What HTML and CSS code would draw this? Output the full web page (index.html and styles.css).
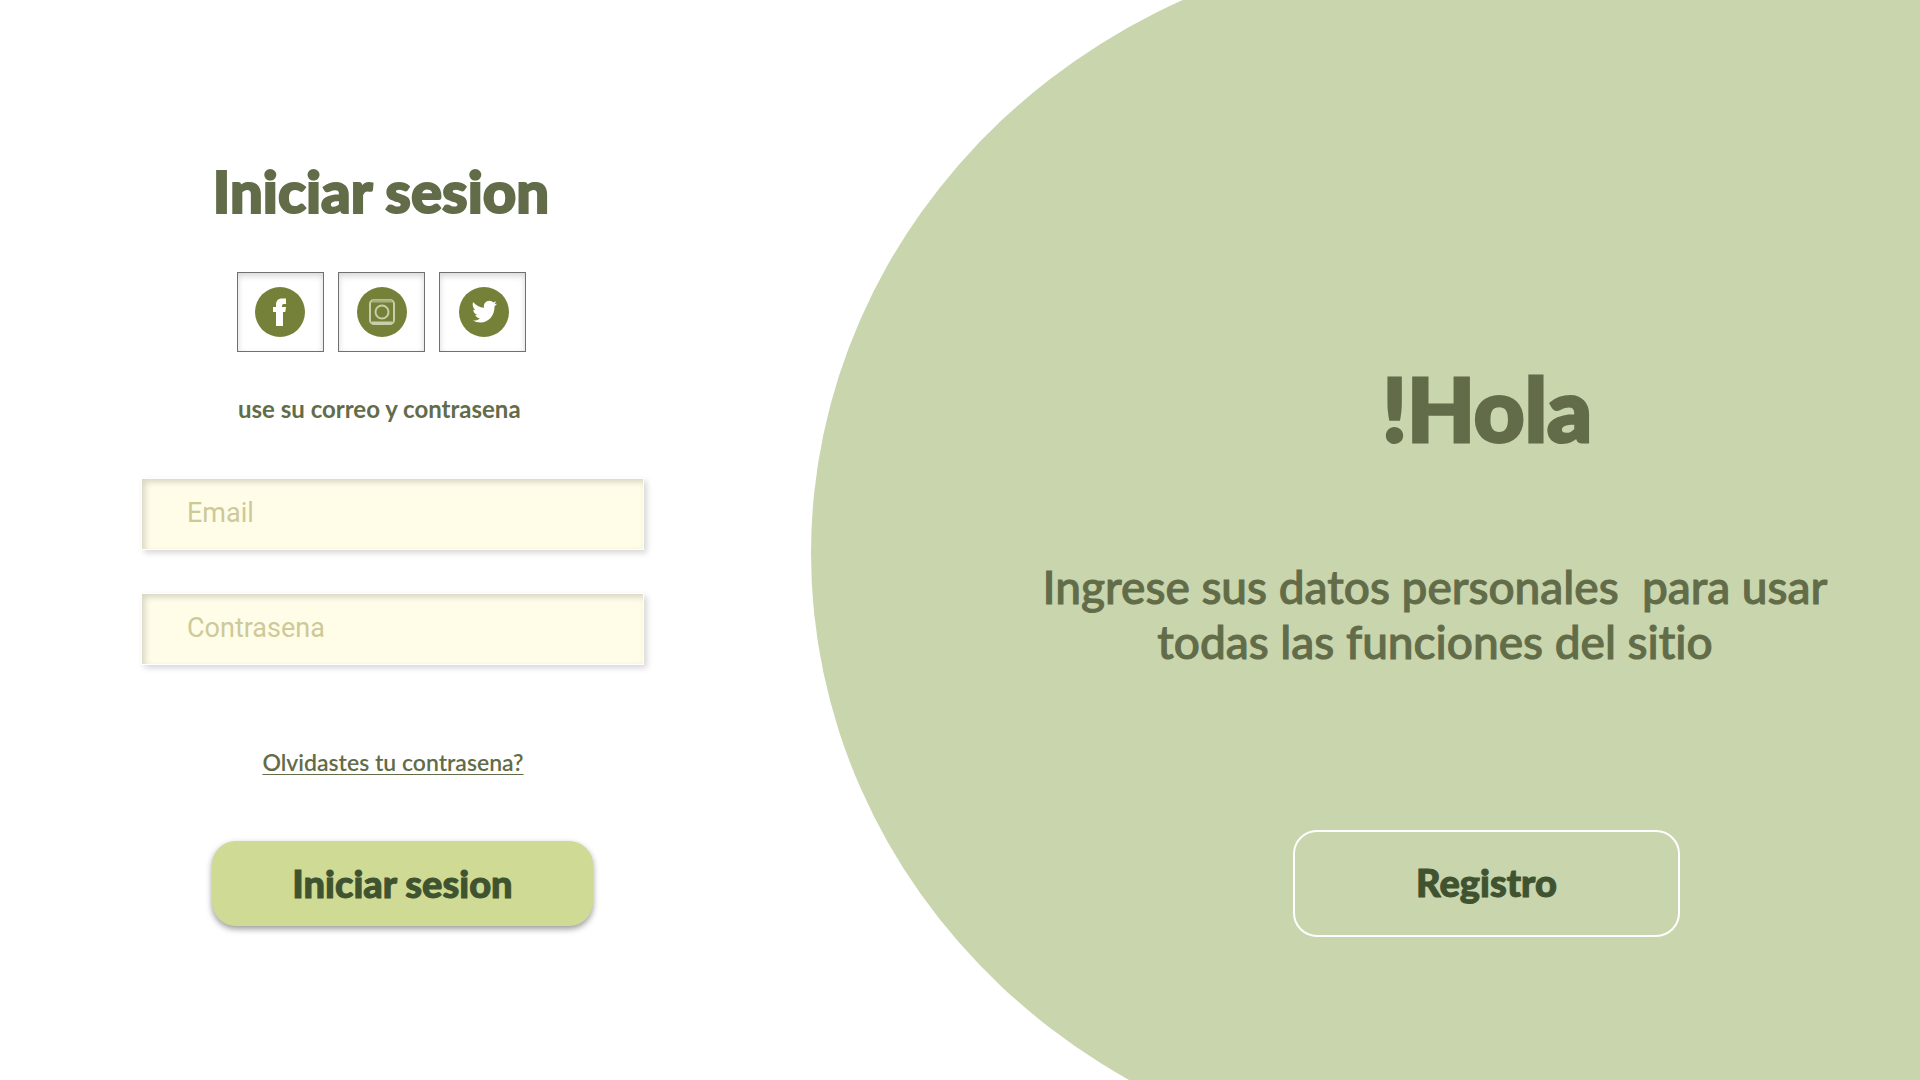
FILE: index.html
```html
<!DOCTYPE html>
<html lang="es">
<head>
  <meta charset="utf-8">
  <meta name="viewport" content="width=device-width, initial-scale=1">
  <title>Iniciar sesion</title>
  <link rel="stylesheet" href="styles.css">
</head>
<body>
  <main class="page">
    <form class="login">
      <div class="login-intro">
        <h1 class="login-title">Iniciar sesion</h1>
        <div class="social">
          <button class="social-button" type="button" aria-label="Facebook">
            <svg class="social-icon" viewBox="0 0 50 50" aria-hidden="true">
              <circle cx="25" cy="25" r="25" fill="#758039"/>
              <path d="M21 39V25h-3v-5h3v-2c0-4.500 2.500-6.500 6-6.500h4v5.500h-2c-1.500 0-2 .7-2 2V20h4l-.7 5H28v14z" fill="#fff"/>
            </svg>
          </button>
          <button class="social-button" type="button" aria-label="Instagram">
            <svg class="social-icon" viewBox="0 0 50 50" aria-hidden="true">
              <circle cx="26" cy="25" r="25" fill="#758039"/>
              <g fill="none" stroke="#c8cea9" stroke-width="2">
                <rect x="14" y="13" width="24" height="24" rx="4"/>
                <circle cx="26" cy="25" r="6.500"/>
              </g>
              <path d="M16 14h20" stroke="#a9b17e" stroke-width="3"/>
              <path d="M16 36h20" stroke="#c8cea9" stroke-width="3"/>
            </svg>
          </button>
          <button class="social-button" type="button" aria-label="Twitter">
            <svg class="social-icon" viewBox="0 0 50 50" aria-hidden="true">
              <circle cx="27" cy="25" r="25" fill="#758039"/>
              <path transform="translate(2 0)" d="M14 15c3 3.500 6.500 5.500 11 5.700-.8-4 2-7 5.300-7 1.700 0 3 .7 4 1.800l3-1.200-1.800 3 2.500-.6-2.500 2.800c.3 9-6 16-14 16-3 0-5.500-.8-7.500-2 3 .2 5.300-.6 7-2-2.500-.2-4-1.700-4.700-3.500h2c-2.500-1-4-2.800-4-5.200l2 .5c-2.200-2-3.200-5-2.300-8.300z" fill="#fff"/>
            </svg>
          </button>
        </div>
        <p class="login-hint">use su correo y contrasena</p>
      </div>
      <div class="fields">
        <input class="field" type="email" name="email" placeholder="Email" aria-label="Email">
        <input class="field" type="password" name="password" placeholder="Contrasena" aria-label="Contrasena">
      </div>
      <a class="forgot" href="#">Olvidastes tu contrasena?</a>
      <button class="button button-login" type="submit">Iniciar sesion</button>
    </form>
    <section class="welcome">
      <div class="welcome-content">
        <h2 class="welcome-title">!Hola</h2>
        <p class="welcome-text">Ingrese sus datos personales&nbsp; para usar<br>todas las funciones del sitio</p>
        <button class="button button-register" type="button">Registro</button>
      </div>
    </section>
  </main>
</body>
</html>
```
FILE: styles.css
```css
:root {
  --olive: #626c49;
  --forest: #3f5330;
  --sage: #c9d5ad;
}

* {
  box-sizing: border-box;
}

body {
  margin: 0;
  background: #fff;
  color: var(--olive);
  font-family: "Berlin Sans FB", Lato, "Open Sans", sans-serif;
  font-variant-ligatures: none;
}

h1,
h2,
p {
  margin: 0;
}

.page {
  display: grid;
  grid-template-columns: 811fr 1109fr;
  min-height: 100vh;
}

.login {
  display: flex;
  flex-direction: column;
  align-items: flex-start;
  padding: 156px 0 0 141px;
}

.login-intro {
  display: flex;
  flex-direction: column;
  align-items: center;
  width: 480px;
}

.login-title {
  font-size: 58px;
  font-weight: 900;
  line-height: 70px;
  -webkit-text-stroke: 2px currentColor;
}

.social {
  display: flex;
  gap: 14px;
  margin-top: 46px;
}

.social-button {
  display: flex;
  align-items: center;
  justify-content: center;
  width: 87px;
  height: 80px;
  padding: 0;
  border: 1px solid #707070;
  background: #fff;
  box-shadow: inset 0 3px 6px rgba(0, 0, 0, 0.16);
}

.social-icon {
  width: 50px;
  height: 50px;
  overflow: visible;
}

.login-hint {
  width: 286px;
  margin-top: 41px;
  font-size: 24px;
  font-weight: 700;
  line-height: 32px;
  white-space: nowrap;
}

.fields {
  display: grid;
  gap: 43px;
  width: 503px;
  margin-top: 53px;
}

.field {
  width: 100%;
  height: 72px;
  padding: 0 45px 2px;
  border: 1px solid #fff;
  border-radius: 0;
  outline: 0;
  background: #fffde8;
  box-shadow: 3px 3px 6px rgba(0, 0, 0, 0.16), inset 3px 3px 6px rgba(0, 0, 0, 0.16);
  color: var(--olive);
  font-family: Bahnschrift, Roboto, sans-serif;
  font-size: 27px;
}

.field::placeholder {
  color: #cdc999;
  opacity: 1;
}

.forgot {
  width: 504px;
  margin-top: 80px;
  color: inherit;
  font-size: 23px;
  font-weight: 600;
  line-height: 34px;
  text-align: center;
  text-decoration-thickness: 1px;
  text-underline-offset: 3px;
}

.button {
  border-radius: 24px;
  color: var(--forest);
  font-family: inherit;
  font-size: 38px;
  font-weight: 900;
  -webkit-text-stroke: 1px currentColor;
}

.button-login {
  width: 381px;
  height: 85px;
  margin: 62px 0 0 71px;
  padding-bottom: 2px;
  border: 0;
  background: #cfdb95;
  box-shadow: 0 3px 6px rgba(0, 0, 0, 0.4);
}

/* The rounded side is an ellipse taller than the panel, cut off at its top and bottom. */
.welcome {
  padding: 346px 0 0 229px;
  background: var(--sage);
  clip-path: inset(-5.5% 0 -8% 0 round 59% 0 0 59% / 57% 0 0 57%);
}

.welcome-content {
  display: flex;
  flex-direction: column;
  width: 790px;
}

.welcome-title {
  padding-left: 104px;
  font-size: 88px;
  font-weight: 900;
  line-height: 124px;
  text-align: center;
  -webkit-text-stroke: 3px currentColor;
}

.welcome-text {
  margin-top: 89px;
  font-size: 46px;
  font-weight: 500;
  line-height: 55px;
  text-align: center;
  white-space: nowrap;
  -webkit-text-stroke: 1px currentColor;
}

.button-register {
  width: 387px;
  height: 107px;
  margin: 161px 0 0 253px;
  padding-bottom: 4px;
  border: 2px solid #fff;
  background: transparent;
}
```
